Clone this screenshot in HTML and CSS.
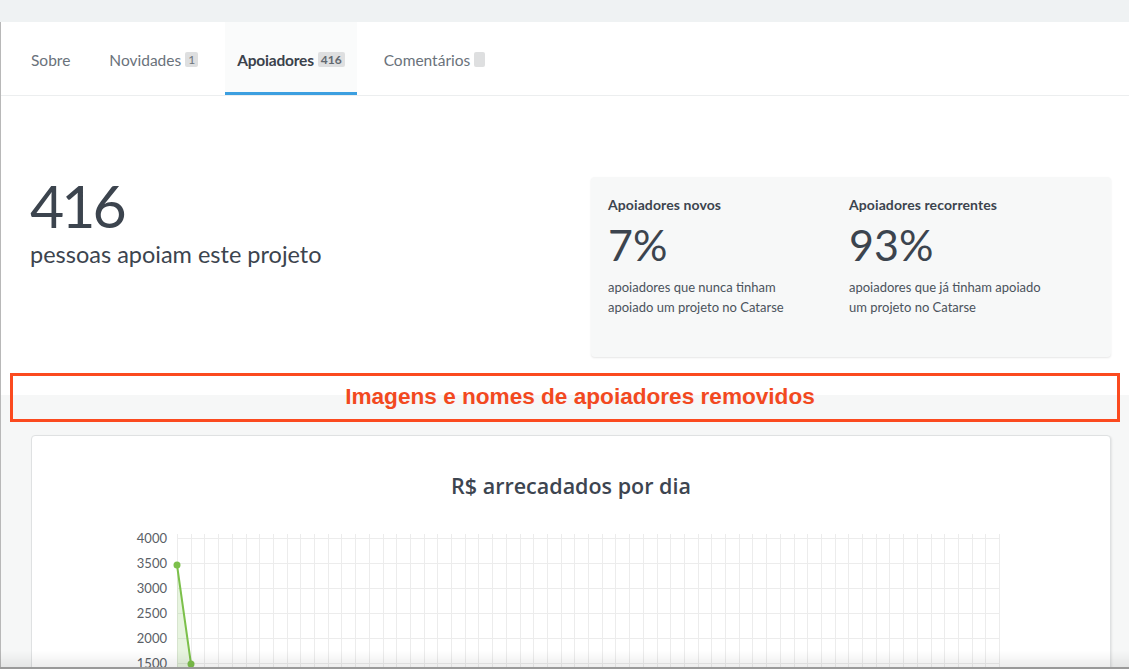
FILE: index.html
```html
<!DOCTYPE html>
<html lang="pt-BR">
<head>
<meta charset="utf-8">
<title>Apoiadores</title>
<link rel="stylesheet" href="styles.css">
</head>
<body>
<div class="topstrip"></div>
<div class="page">
  <nav class="tabs">
    <a class="tab">Sobre</a>
    <a class="tab">Novidades <span class="badge">1</span></a>
    <a class="tab active">Apoiadores <span class="badge">416</span></a>
    <a class="tab">Comentários <span class="badge empty"></span></a>
  </nav>
  <section class="summary">
    <div class="total">
      <div class="total-num">416</div>
      <div class="total-label">pessoas apoiam este projeto</div>
    </div>
    <div class="stats">
      <div class="stat">
        <div class="stat-title">Apoiadores novos</div>
        <div class="stat-num">7%</div>
        <div class="stat-desc">apoiadores que nunca tinham<br>apoiado um projeto no Catarse</div>
      </div>
      <div class="stat">
        <div class="stat-title">Apoiadores recorrentes</div>
        <div class="stat-num">93%</div>
        <div class="stat-desc">apoiadores que já tinham apoiado<br>um projeto no Catarse</div>
      </div>
    </div>
  </section>
  <section class="graysec">
    <div class="chart-card">
      <h2 class="chart-title">R$ arrecadados por dia</h2>
      <svg class="chart" width="1077" height="260" viewBox="0 0 1077 260">
        <g id="grid" stroke="#ececec" stroke-width="1"></g>
        <g class="labels" font-family="Lato, 'Open Sans', sans-serif" font-size="13" fill="#5a6066" text-anchor="end">
          <text x="135" y="16.5">4000</text>
          <text x="135" y="41.5">3500</text>
          <text x="135" y="66.5">3000</text>
          <text x="135" y="91.5">2500</text>
          <text x="135" y="116.5">2000</text>
          <text x="135" y="141.5">1500</text>
          <text x="135" y="166.5">1000</text>
          <text x="135" y="191.5">500</text>
        </g>
        <polygon points="145,39 159,138 173,200 173,212 145,212" fill="#7cc04b" fill-opacity="0.18"/>
        <polyline points="145,39 159,138 173,200" fill="none" stroke="#7cc04b" stroke-width="2"/>
        <circle cx="145" cy="39" r="3.5" fill="#7cc04b"/>
        <circle cx="159" cy="138" r="3.5" fill="#7cc04b"/>
      </svg>
    </div>
  </section>
  <div class="removed">Imagens e nomes de apoiadores removidos</div>
</div>
<div class="bottom-edge"></div>
<script>
  var g = document.getElementById('grid');
  var ns = 'http://www.w3.org/2000/svg';
  for (var i = 0; i <= 60; i++) {
    var x = Math.round(145 + i * 13.7) + 0.5;
    var l = document.createElementNS(ns, 'line');
    l.setAttribute('x1', x); l.setAttribute('x2', x);
    l.setAttribute('y1', 8); l.setAttribute('y2', 260);
    g.appendChild(l);
  }
  for (var j = 0; j < 10; j++) {
    var y = 12 + j * 25 + 0.5;
    var h = document.createElementNS(ns, 'line');
    h.setAttribute('x1', 145); h.setAttribute('x2', 967);
    h.setAttribute('y1', y); h.setAttribute('y2', y);
    g.appendChild(h);
  }
</script>
</body>
</html>
```

FILE: styles.css
```css
* { box-sizing: border-box; }
html, body { margin: 0; padding: 0; }
body {
  font-family: Lato, "Open Sans", "Liberation Sans", sans-serif;
  color: #3c444e;
  background: #f6f7f7;
  overflow: hidden;
  height: 669px;
}
.topstrip {
  height: 22px;
  background: #eff2f3;
}
.page {
  position: relative;
  border-left: 1px solid #b8b8b8;
  background: #fff;
  height: 647px;
}
.tabs {
  display: flex;
  gap: 15px;
  height: 74px;
  padding-left: 18px;
  border-bottom: 1px solid #eceeef;
}
.tab {
  display: flex;
  align-items: center;
  padding: 5px 12px 0;
  font-size: 15.5px;
  color: #6a727b;
  border-bottom: 3px solid transparent;
  white-space: nowrap;
}
.tab.active {
  color: #3a424b;
  font-weight: 700;
  background: #fafbfb;
  border-bottom-color: #3c9fe0;
  letter-spacing: -0.2px;
}
.badge {
  display: inline-block;
  margin-left: 4px;
  min-width: 12px;
  height: 15px;
  padding: 0 3px;
  background: #dedfe0;
  color: #6f767d;
  font-size: 12px;
  font-weight: 400;
  line-height: 15px;
  border-radius: 2px;
  text-align: center;
  letter-spacing: 0;
}
.tab.active .badge { font-weight: 700; color: #61686f; padding: 0 3px; }
.badge.empty { width: 11px; min-width: 11px; padding: 0; }

.summary {
  display: flex;
  justify-content: space-between;
  padding: 81px 18px 0 29px;
  height: 299px;
}
.total-num {
  font-size: 59px;
  line-height: 61px;
  margin-top: -2px;
  letter-spacing: -3px;
}
.total-label {
  font-size: 23.5px;
  margin-top: 4px;
}
.stats {
  width: 520px;
  height: 180px;
  background: #f7f8f8;
  border-radius: 4px;
  box-shadow: 0 1px 2px rgba(0,0,0,0.1);
  display: flex;
  padding: 19px 17px;
}
.stat { width: 241px; }
.stat-title { font-size: 14px; font-weight: 700; color: #3c444e; letter-spacing: 0.1px; }
.stat-num { font-size: 43px; line-height: 50px; margin-top: 7px; }
.stat-desc { font-size: 13px; line-height: 19.5px; margin-top: 8px; color: #4b535c; }

.graysec {
  background: #f6f7f7;
  padding: 40px 18px 0 30px;
  height: 300px;
}
.chart-card {
  background: #fff;
  border: 1px solid #dfe1e2;
  border-radius: 4px;
  height: 300px;
  box-shadow: 1px 1px 2px rgba(0,0,0,0.08);
}
.chart-title {
  margin: 37px 0 0;
  text-align: center;
  font-family: "Open Sans", Lato, sans-serif;
  font-size: 21.5px;
  font-weight: 600;
  color: #3d4550;
  line-height: 25px;
}
.chart { display: block; margin-top: 28px; }

.removed {
  position: absolute;
  left: 9px;
  top: 351px;
  width: 1110px;
  height: 49px;
  padding-left: 30px;
  border: 3px solid #fb4a1f;
  font-family: "Liberation Sans", Arial, sans-serif;
  font-weight: 700;
  font-size: 22.6px;
  color: #f2491f;
  text-align: center;
  line-height: 42px;
}
.bottom-edge {
  position: fixed;
  left: 0;
  right: 0;
  bottom: 0;
  height: 18px;
  background: linear-gradient(to bottom, rgba(0,0,0,0), rgba(0,0,0,0.07));
  border-bottom: 2px solid #9a9a9a;
}
```
